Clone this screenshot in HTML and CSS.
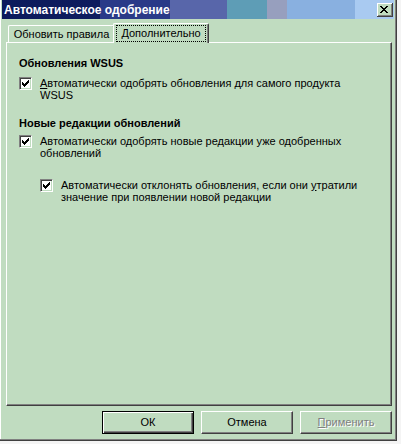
FILE: index.html
```html
<!DOCTYPE html>
<html lang="ru">
<head>
<meta charset="utf-8">
<title>Автоматическое одобрение</title>
<link rel="stylesheet" href="styles.css">
</head>
<body>
<div class="window">
  <div class="titlebar">
    <span class="title">Автоматическое одобрение</span>
    <span class="close">
      <svg width="8" height="7" viewBox="0 0 8 7" shape-rendering="crispEdges"><path fill="#000" d="M0 0h2v1H0zM6 0h2v1H6zM1 1h2v1H1zM5 1h2v1H5zM2 2h4v1H2zM3 3h2v1H3zM2 4h4v1H2zM1 5h2v1H1zM5 5h2v1H5zM0 6h2v1H0zM6 6h2v1H6z"/></svg>
    </span>
  </div>
  <div class="tabstrip">
    <div class="tab">Обновить правила</div>
    <div class="tab active"><span class="focus">Дополнительно</span></div>
  </div>
  <div class="panel">
    <div class="heading">Обновления WSUS</div>
    <div class="check">
      <span class="box"><svg width="7" height="7" viewBox="0 0 7 7" shape-rendering="crispEdges"><path fill="#000" d="M0 2h1v3H0zM1 3h1v3H1zM2 4h1v3H2zM3 3h1v3H3zM4 2h1v3H4zM5 1h1v3H5zM6 0h1v3H6z"/></svg></span>
      <span class="label"><u>А</u>втоматически одобрять обновления для самого продукта<br>WSUS</span>
    </div>
    <div class="heading second">Новые редакции обновлений</div>
    <div class="check second">
      <span class="box"><svg width="7" height="7" viewBox="0 0 7 7" shape-rendering="crispEdges"><path fill="#000" d="M0 2h1v3H0zM1 3h1v3H1zM2 4h1v3H2zM3 3h1v3H3zM4 2h1v3H4zM5 1h1v3H5zM6 0h1v3H6z"/></svg></span>
      <span class="label">Автоматически одобрять новые редакции уже одобренных<br>обновлений</span>
    </div>
    <div class="check nested">
      <span class="box"><svg width="7" height="7" viewBox="0 0 7 7" shape-rendering="crispEdges"><path fill="#000" d="M0 2h1v3H0zM1 3h1v3H1zM2 4h1v3H2zM3 3h1v3H3zM4 2h1v3H4zM5 1h1v3H5zM6 0h1v3H6z"/></svg></span>
      <span class="label">Автоматически отклонять обновления, если они <u>у</u>тратили<br>значение при появлении новой редакции</span>
    </div>
  </div>
  <div class="buttons">
    <div class="btn default"><span class="btn-inner">ОК</span></div>
    <div class="btn"><span class="btn-inner">Отмена</span></div>
    <div class="btn disabled"><span class="btn-inner"><u>П</u>рименить</span></div>
  </div>
</div>
</body>
</html>
```

FILE: styles.css
```css
html, body {
  margin: 0;
  padding: 0;
  background: #f4f4f4;
}

body {
  font-family: "Liberation Sans", Arial, sans-serif;
  font-size: 11px;
  color: #000;
}

.window {
  width: 397px;
  height: 441px;
  box-sizing: border-box;
  background: #c0dcc0;
  border-right: 1px solid #404040;
  border-bottom: 1px solid #404040;
  box-shadow: inset -1px -1px #808080, inset 1px 0 #ffffff;
  padding: 0 2px 0 2px;
  display: flex;
  flex-direction: column;
}

.titlebar {
  height: 19px;
  display: flex;
  align-items: center;
  justify-content: space-between;
  padding: 0 1px 0 2px;
  background: linear-gradient(to right,
    #0c1a5c 0, #0e1c5e 98px,
    #2a3a88 98px, #2a3a88 168px,
    #5866aa 168px, #5866aa 225px,
    #5e9db6 225px, #5e9db6 265px,
    #979fbe 265px, #979fbe 285px,
    #89b0e0 285px, #89b0e0 353px,
    #a9caf1 353px);
}

.title {
  color: #fff;
  font-weight: bold;
  font-size: 12px;
}

.close {
  width: 16px;
  height: 14px;
  box-sizing: border-box;
  background: #c0dcc0;
  border-right: 1px solid #404040;
  border-bottom: 1px solid #404040;
  box-shadow: inset 1px 1px #ffffff, inset -1px -1px #808080;
  display: flex;
  align-items: center;
  justify-content: center;
  padding-right: 1px;
}

.close svg {
  display: block;
}

.tabstrip {
  display: flex;
  align-items: flex-end;
  margin-top: 4px;
  padding-left: 6px;
  height: 19px;
  position: relative;
  z-index: 1;
}

.tab {
  height: 17px;
  box-sizing: border-box;
  padding: 2px 4px 0 4px;
  border-top: 1px solid #fff;
  border-left: 1px solid #fff;
  border-right: 1px solid #404040;
  box-shadow: inset -1px 0 #808080;
  border-radius: 2px 2px 0 0;
  width: 107px;
  white-space: nowrap;
  text-align: center;
}

.tab.active {
  height: 20px;
  width: 96px;
  margin-left: -2px;
  margin-bottom: -1px;
  background: #c0dcc0;
  padding: 2px 3px 0 3px;
}

.focus {
  display: block;
  outline: 1px dotted #000;
  outline-offset: 0;
  padding: 0 1px 1px 1px;
  line-height: 14px;
}

.panel {
  margin-left: 4px;
  margin-right: 2px;
  height: 364px;
  box-sizing: border-box;
  border-top: 1px solid #fff;
  border-left: 1px solid #fff;
  border-right: 1px solid #404040;
  border-bottom: 1px solid #404040;
  box-shadow: inset -1px -1px #808080;
  padding: 14px 10px 0 12px;
  display: flex;
  flex-direction: column;
}

.heading {
  font-weight: bold;
  line-height: 12px;
}

.heading.second {
  margin-top: 16px;
}

.check {
  display: flex;
  align-items: flex-start;
  margin-top: 8px;
  line-height: 12px;
}

.check.second {
  margin-top: 6px;
}

.check.nested {
  margin-left: 21px;
  margin-top: 20px;
}

.box {
  flex: none;
  width: 13px;
  height: 13px;
  box-sizing: border-box;
  margin-top: 0;
  margin-right: 8px;
  background: #fff;
  border-top: 1px solid #808080;
  border-left: 1px solid #808080;
  border-right: 1px solid #fff;
  border-bottom: 1px solid #fff;
  box-shadow: inset 1px 1px #404040, inset -1px -1px #c0dcc0;
  display: flex;
  align-items: center;
  justify-content: center;
}

.box svg {
  display: block;
}

.label u {
  text-decoration: underline;
}

.buttons {
  display: flex;
  justify-content: flex-end;
  gap: 7px;
  margin-top: 5px;
  margin-right: 2px;
}

.btn {
  width: 92px;
  height: 23px;
  box-sizing: border-box;
  background: #c0dcc0;
  border-top: 1px solid #fff;
  border-left: 1px solid #fff;
  border-right: 1px solid #404040;
  border-bottom: 1px solid #404040;
  box-shadow: inset -1px -1px #808080;
  display: flex;
  align-items: center;
  justify-content: center;
}

.btn.default {
  border: 1px solid #000;
  box-shadow: inset 1px 1px #fff, inset -1px -1px #404040, inset -2px -2px #808080;
}

.btn-inner {
  line-height: 13px;
}

.btn.disabled .btn-inner {
  color: #808080;
  text-shadow: 1px 1px 0 #fff;
}
```
